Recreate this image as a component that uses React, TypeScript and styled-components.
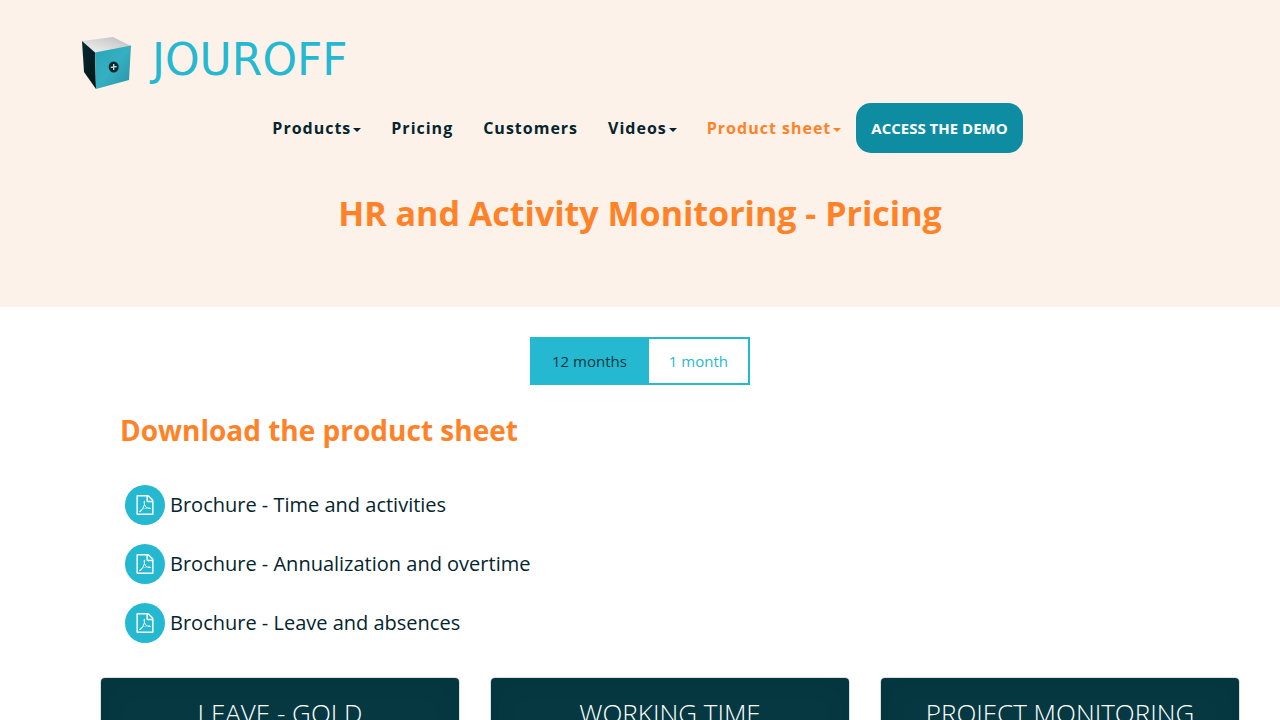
import React, { useState } from "react";
import styled, { createGlobalStyle } from "styled-components";

const color = {
  cream: "#fdf2e9",
  cyan: "#25b9d1",
  teal: "#0e8ca1",
  orange: "#ff8228",
  ink: "#04252d",
  card: "#053841",
};

const GlobalStyle = createGlobalStyle`
  *, *::before, *::after { box-sizing: border-box; }
  body {
    margin: 0;
    background: #fff;
    color: ${color.ink};
    font-family: "Open Sans", "Noto Sans", sans-serif;
    font-size: 15px;
    line-height: 20px;
  }
  h1, h2, h3, ul { margin: 0; padding: 0; }
  ul { list-style: none; }
  a { color: inherit; text-decoration: none; }
  button { font: inherit; cursor: pointer; }
`;

const Header = styled.header`
  background: ${color.cream};
  padding: 33px 0 73px;
`;

const Brand = styled.a`
  display: flex;
  align-items: center;
  width: fit-content;
  height: 60px;
  margin-left: 77px;
`;

const BrandName = styled.span`
  margin-left: 17px;
  padding-bottom: 6px;
  color: ${color.cyan};
  font-family: "DejaVu Sans", Verdana, sans-serif;
  font-size: 44px;
  line-height: 52px;
`;

const Nav = styled.nav`
  display: flex;
  flex-wrap: wrap;
  justify-content: center;
  align-items: center;
  margin-top: 10px;
`;

const navText = `
  display: flex;
  align-items: center;
  padding: 15px;
  border: 0;
  background: none;
  font-size: 16px;
  font-weight: 700;
  line-height: 20px;
  letter-spacing: 1px;
`;

const NavLink = styled.a`
  ${navText}
`;

const NavMenu = styled.button<{ $active?: boolean }>`
  && {
    ${navText}
    font-family: inherit;
  }
  color: ${(p) => (p.$active ? color.orange : color.ink)};

  &::after {
    content: "";
    margin: 3px 0 0 2px;
    border-top: 4px solid currentColor;
    border-left: 4px solid transparent;
    border-right: 4px solid transparent;
  }
`;

const DemoLink = styled.a`
  padding: 15px;
  border-radius: 15px;
  background: ${color.teal};
  color: #fff;
  font-weight: 700;
`;

const PageTitle = styled.h1`
  margin-top: 39px;
  color: ${color.orange};
  font-size: 34px;
  line-height: 42px;
  text-align: center;
`;

const Period = styled.div`
  display: flex;
  justify-content: center;
  padding-top: 30px;
`;

const PeriodButton = styled.button<{ $on: boolean }>`
  padding: 12px 20px;
  border: 2px solid ${color.cyan};
  background: ${(p) => (p.$on ? color.cyan : "#fff")};
  color: ${(p) => (p.$on ? color.card : color.cyan)};

  & + & { margin-left: -2px; }
`;

const Sheets = styled.section`
  padding: 25px 120px 0;
`;

const SectionTitle = styled.h2`
  color: ${color.orange};
  font-size: 28px;
  line-height: 40px;
`;

const SheetList = styled.ul`
  display: flex;
  flex-direction: column;
  gap: 19px;
  margin: 35px 5px 0;
`;

const SheetLink = styled.a`
  display: flex;
  align-items: center;
  gap: 5px;
  width: fit-content;
  font-size: 20px;
`;

const Disc = styled.span`
  display: grid;
  place-items: center;
  width: 40px;
  height: 40px;
  border-radius: 50%;
  background: ${color.cyan};
  color: #fff;
`;

const Plans = styled.section`
  display: grid;
  grid-template-columns: repeat(3, 1fr);
  gap: 30px;
  padding: 34px 40px 0 100px;
`;

const Plan = styled.article`
  border: 1px solid #ddd;
  border-radius: 5px;
  overflow: hidden;
`;

const PlanTitle = styled.h3`
  padding: 17px 15px 20px;
  background: ${color.card};
  box-shadow: inset 0 0 30px rgba(0, 20, 30, 0.06);
  color: #fff;
  font-size: 26px;
  font-weight: 300;
  line-height: 36px;
  text-align: center;
`;

function SafeLogo() {
  return (
    <svg width="58" height="60" viewBox="0 0 58 60" aria-hidden="true">
      <defs>
        <linearGradient id="lid" x1="0" y1="1" x2="1" y2="0">
          <stop offset="0" stopColor="#f4f4f4" />
          <stop offset="1" stopColor="#bdbdbd" />
        </linearGradient>
        <linearGradient id="front" x1="0" y1="0" x2="1" y2="1">
          <stop offset="0" stopColor="#2aa5b6" />
          <stop offset="0.5" stopColor="#35afc2" />
          <stop offset="1" stopColor="#2893a4" />
        </linearGradient>
        <linearGradient id="side" x1="0" y1="0" x2="1" y2="1">
          <stop offset="0" stopColor="#062c33" />
          <stop offset="1" stopColor="#011316" />
        </linearGradient>
      </defs>
      <path d="M5 8L36 4L54 13L18 20Z" fill="url(#lid)" />
      <path d="M5 8L18 19.500L19 56L7 39Z" fill="url(#side)" />
      <path d="M18 19.500L54 12.500L52 47L19 56Z" fill="url(#front)" />
      <ellipse cx="36.700" cy="34" rx="5" ry="5.500" fill="#08272e" />
      <path d="M36.700 31V37M33.700 34.400L39.700 33.600" stroke="#d5e4e6" strokeWidth="1.300" />
    </svg>
  );
}

function PdfIcon() {
  return (
    <svg width="18" height="20" viewBox="0 0 1536 1792" fill="currentColor" aria-hidden="true">
      <path d="M1468 380q28 28 48 76t20 88v1152q0 40-28 68t-68 28h-1344q-40 0-68-28t-28-68v-1600q0-40 28-68t68-28h896q40 0 88 20t76 48zm-444-244v376h376q-10-29-22-41l-313-313q-12-12-41-22zm384 1528v-1024h-416q-40 0-68-28t-28-68v-416h-768v1536h1280zm-514-593q33 26 84 56 59-7 117-7 147 0 177 49 16 22 2 52 0 1-1 2l-2 2v1q-6 38-71 38-48 0-115-20t-130-53q-221 24-392 83-153 262-242 262-15 0-28-7l-24-12q-1-1-6-5-10-10-6-36 9-40 56-91.500t132-96.500q14-9 23 6 2 2 2 4 52-85 107-197 68-136 104-262-24-82-30.500-159.500t6.500-127.500q11-40 42-40h22q23 0 35 15 18 21 9 68-2 6-4 8 1 3 1 8v30q-2 123-14 192 55 164 146 238zm-576 411q52-24 137-158-51 40-87.500 84t-49.500 74zm398-920q-15 42-2 132 1-7 7-44 0-3 7-43 1-4 4-8-1-1-1-2-1-2-1-3-1-22-13-36 0 1-1 2v2zm-124 661q135-54 284-81-2-1-13-9.500t-16-13.500q-76-67-127-176-27 86-83 197-30 56-45 83zm646-16q-24-24-140-24 76 28 124 28 14 0 18-1 0-1-2-3z" />
    </svg>
  );
}

const periods = ["12 months", "1 month"];
const sheets = ["Time and activities", "Annualization and overtime", "Leave and absences"];
const plans = ["LEAVE - GOLD", "WORKING TIME", "PROJECT MONITORING"];

export default function App() {
  const [period, setPeriod] = useState(periods[0]);

  return (
    <>
      <GlobalStyle />
      <Header>
        <Brand href="#">
          <SafeLogo />
          <BrandName>JOUROFF</BrandName>
        </Brand>
        <Nav>
          <NavMenu type="button">Products</NavMenu>
          <NavLink href="#pricing">Pricing</NavLink>
          <NavLink href="#customers">Customers</NavLink>
          <NavMenu type="button">Videos</NavMenu>
          <NavMenu type="button" $active>Product sheet</NavMenu>
          <DemoLink href="#demo">ACCESS THE DEMO</DemoLink>
        </Nav>
        <PageTitle>HR and Activity Monitoring - Pricing</PageTitle>
      </Header>
      <main>
        <Period>
          {periods.map((p) => (
            <PeriodButton key={p} type="button" $on={p === period} aria-pressed={p === period} onClick={() => setPeriod(p)}>
              {p}
            </PeriodButton>
          ))}
        </Period>
        <Sheets>
          <SectionTitle>Download the product sheet</SectionTitle>
          <SheetList>
            {sheets.map((s) => (
              <li key={s}>
                <SheetLink href="#brochure">
                  <Disc><PdfIcon /></Disc>
                  Brochure - {s}
                </SheetLink>
              </li>
            ))}
          </SheetList>
        </Sheets>
        <Plans id="pricing">
          {plans.map((p) => (
            <Plan key={p}>
              <PlanTitle>{p}</PlanTitle>
            </Plan>
          ))}
        </Plans>
      </main>
    </>
  );
}
